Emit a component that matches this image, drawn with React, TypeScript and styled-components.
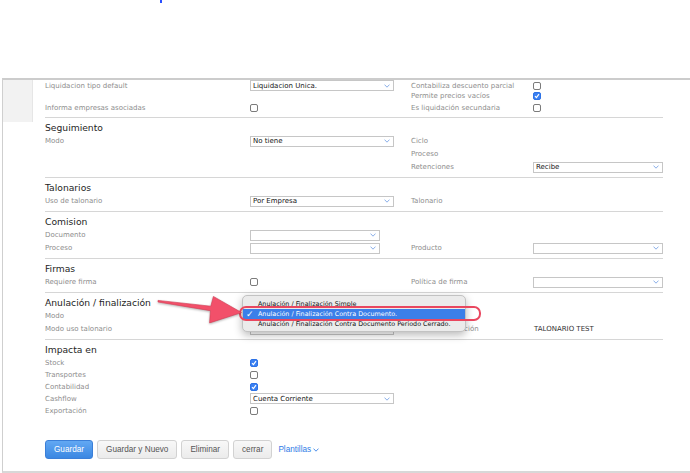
import React from 'react'
import styled, { createGlobalStyle } from 'styled-components'

const GlobalStyle = createGlobalStyle`
  html, body {
    margin: 0;
    padding: 0;
    background: #fff;
  }
  body {
    width: 690px;
    height: 473px;
    overflow: hidden;
    font-family: "DejaVu Sans", Verdana, sans-serif;
  }
`

const Chevron = ({ color = '#7ea6e6' }: { color?: string }) => (
  <svg width="6" height="4" viewBox="0 0 6 4">
    <polyline points="0.5,0.6 3,3.2 5.5,0.6" fill="none" stroke={color} strokeWidth="0.9" />
  </svg>
)

const Select = ({ value = '', w = 144 }: { value?: string; w?: number }) => (
  <SelectBox $w={w}>
    <span>{value}</span>
    <Chevron />
  </SelectBox>
)

const Check = ({ on = false }: { on?: boolean }) => (
  <CheckBox $on={on}>
    {on && (
      <svg width="6" height="6" viewBox="0 0 6 6">
        <polyline points="1,3.2 2.4,4.6 5,1.2" fill="none" stroke="#fff" strokeWidth="1.2" />
      </svg>
    )}
  </CheckBox>
)

const App = () => {
  return (
    <Page>
      <GlobalStyle />
      <TopStrip>
        <Caret />
      </TopStrip>

      <Card>
        <Sidebar />
        <Content>
          <Section $top>
            <Row $h={10}>
              <Label>Liquidacion tipo default</Label>
              <Select value="Liquidacion Unica." />
              <Label>Contabiliza descuento parcial</Label>
              <Check />
            </Row>
            <Row $h={12}>
              <span />
              <span />
              <Label>Permite precios vacíos</Label>
              <Check on />
            </Row>
            <Row $h={12}>
              <Label>Informa empresas asociadas</Label>
              <Check />
              <Label>Es liquidación secundaria</Label>
              <Check />
            </Row>
          </Section>

          <Section>
            <Title>Seguimiento</Title>
            <Row>
              <Label>Modo</Label>
              <Select value="No tiene" />
              <Label>Ciclo</Label>
              <span />
            </Row>
            <Row>
              <span />
              <span />
              <Label>Proceso</Label>
              <span />
            </Row>
            <Row>
              <span />
              <span />
              <Label>Retenciones</Label>
              <Select value="Recibe" w={130} />
            </Row>
          </Section>

          <Section>
            <Title>Talonarios</Title>
            <Row>
              <Label>Uso de talonario</Label>
              <Select value="Por Empresa" />
              <Label>Talonario</Label>
              <span />
            </Row>
          </Section>

          <Section>
            <Title>Comision</Title>
            <Row>
              <Label>Documento</Label>
              <Select w={130} />
              <span />
              <span />
            </Row>
            <Row>
              <Label>Proceso</Label>
              <Select w={130} />
              <Label>Producto</Label>
              <Select w={130} />
            </Row>
          </Section>

          <Section>
            <Title>Firmas</Title>
            <Row>
              <Label>Requiere firma</Label>
              <Check />
              <Label>Política de firma</Label>
              <Select w={130} />
            </Row>
          </Section>

          <Section>
            <Title>Anulación / finalización</Title>
            <Row>
              <Label>Modo</Label>
              <Select />
              <span />
              <span />
            </Row>
            <Row>
              <Label>Modo uso talonario</Label>
              <Select />
              <Label>Talonario anulación</Label>
              <Value>TALONARIO TEST</Value>
            </Row>
          </Section>

          <Section $last>
            <Title>Impacta en</Title>
            <Row $h={12}>
              <Label>Stock</Label>
              <Check on />
            </Row>
            <Row $h={12}>
              <Label>Transportes</Label>
              <Check />
            </Row>
            <Row $h={12}>
              <Label>Contabilidad</Label>
              <Check on />
            </Row>
            <Row $h={12}>
              <Label>Cashflow</Label>
              <Select value="Cuenta Corriente" />
            </Row>
            <Row $h={12}>
              <Label>Exportación</Label>
              <Check />
            </Row>
          </Section>

          <Actions>
            <Button $primary>Guardar</Button>
            <Button>Guardar y Nuevo</Button>
            <Button>Eliminar</Button>
            <Button>cerrar</Button>
            <LinkButton>
              Plantillas <Chevron color="#3a82e8" />
            </LinkButton>
          </Actions>
        </Content>
      </Card>

      <Menu>
        <MenuItem>Anulación / Finalización Simple</MenuItem>
        <MenuItem $active>
          <Tick>✓</Tick>
          Anulación / Finalización Contra Documento.
        </MenuItem>
        <MenuItem>Anulación / Finalización Contra Documento Periodo Cerrado.</MenuItem>
      </Menu>
      <Highlight />

      <Arrow width="690" height="473" viewBox="0 0 690 473">
        <polygon
          points="158,300.4 210.8,306.2 213.4,296.4 241.6,312.6 209.6,322.9 210.4,310.7 158,302"
          fill="#f2506a"
          stroke="#d23a52"
          strokeWidth="0.6"
          strokeLinejoin="round"
        />
      </Arrow>
    </Page>
  )
}

export default App

const Page = styled.div`
  position: relative;
  width: 690px;
  height: 473px;
  overflow: hidden;
`

const TopStrip = styled.div`
  height: 78px;
  padding-left: 160px;
  box-sizing: border-box;
`

const Caret = styled.div`
  width: 2px;
  height: 3px;
  background: #2b50ff;
`

const Card = styled.div`
  display: flex;
  align-items: flex-start;
  margin-left: 2px;
  height: 391px;
  border-top: 2px solid #cccccc;
  border-left: 1px solid #cfcfcf;
  border-bottom: 2px solid #d8d8d8;
`

const Sidebar = styled.div`
  width: 29px;
  height: 42px;
  background: #f2f2f2;
  border-right: 1px solid #e6e6e6;
  flex-shrink: 0;
`

const Content = styled.div`
  padding-left: 12px;
  width: 618px;
  flex-shrink: 0;
`

const Section = styled.div<{ $top?: boolean; $last?: boolean }>`
  padding: ${(p) => (p.$top ? '0 0 3px' : '4px 0 3.5px')};
  border-bottom: ${(p) => (p.$last ? 'none' : '1px solid #d6d6d6')};
`

const Title = styled.div`
  height: 12.5px;
  line-height: 12.5px;
  font-size: 9.2px;
  color: #1e1e1e;
`

const Row = styled.div<{ $h?: number }>`
  display: grid;
  grid-template-columns: 205px 161px 122px 130px;
  align-items: center;
  height: ${(p) => p.$h ?? 13}px;
`

const Label = styled.span`
  font-size: 7px;
  color: #8d8d8d;
  white-space: nowrap;
`

const Value = styled.span`
  font-size: 7px;
  color: #333;
  padding-left: 1px;
  white-space: nowrap;
`

const SelectBox = styled.div<{ $w: number }>`
  box-sizing: border-box;
  width: ${(p) => p.$w}px;
  height: 11px;
  border: 1px solid #c6c6c6;
  background: #fff;
  display: flex;
  align-items: center;
  justify-content: space-between;
  padding: 0 3px 0 2px;
  font-size: 7px;
  color: #151515;
  white-space: nowrap;
  overflow: hidden;
`

const CheckBox = styled.div<{ $on: boolean }>`
  box-sizing: border-box;
  width: 8px;
  height: 8px;
  border-radius: 2px;
  border: 1px solid ${(p) => (p.$on ? '#2d72e6' : '#7b7b7b')};
  background: ${(p) => (p.$on ? '#3a80f2' : '#fff')};
  display: flex;
  align-items: center;
  justify-content: center;
`

const Actions = styled.div`
  display: flex;
  align-items: center;
  gap: 4px;
  margin-top: 20px;
`

const Button = styled.div<{ $primary?: boolean }>`
  box-sizing: border-box;
  height: 19px;
  padding: 0 8px;
  display: flex;
  align-items: center;
  border-radius: 3px;
  font-family: "Liberation Sans", Arial, sans-serif;
  font-size: 8.2px;
  color: ${(p) => (p.$primary ? '#fff' : '#555')};
  border: 1px solid ${(p) => (p.$primary ? '#3b7fd8' : '#d2d2d2')};
  background: ${(p) =>
    p.$primary
      ? 'linear-gradient(#62a8f3, #3b87e2)'
      : 'linear-gradient(#f8f8f8, #ebebeb)'};
`

const LinkButton = styled.div`
  margin-left: 2px;
  display: flex;
  align-items: center;
  gap: 2px;
  font-family: "Liberation Sans", Arial, sans-serif;
  font-size: 8.2px;
  color: #2f7be6;
`

const Menu = styled.div`
  position: absolute;
  left: 242px;
  top: 295px;
  width: 224px;
  box-sizing: border-box;
  padding: 3px 0 2px;
  background: #ebebeb;
  border: 1px solid #c2c2c2;
  border-radius: 5px;
  box-shadow: 0 3px 9px rgba(0, 0, 0, 0.28);
`

const MenuItem = styled.div<{ $active?: boolean }>`
  position: relative;
  height: 10px;
  line-height: 10px;
  padding-left: 15px;
  font-size: 6.4px;
  white-space: nowrap;
  color: ${(p) => (p.$active ? '#fff' : '#111')};
  background: ${(p) => (p.$active ? '#3b7fe9' : 'transparent')};
`

const Tick = styled.span`
  position: absolute;
  left: 3px;
  top: 0;
  font-size: 9px;
  font-weight: bold;
  color: #fff;
`

const Highlight = styled.div`
  position: absolute;
  left: 239px;
  top: 306px;
  width: 242px;
  height: 15px;
  box-sizing: border-box;
  border: 2px solid #e9475f;
  border-radius: 7px;
`

const Arrow = styled.svg`
  position: absolute;
  left: 0;
  top: 0;
  pointer-events: none;
  filter: drop-shadow(0 1px 1px rgba(0, 0, 0, 0.3));
`
